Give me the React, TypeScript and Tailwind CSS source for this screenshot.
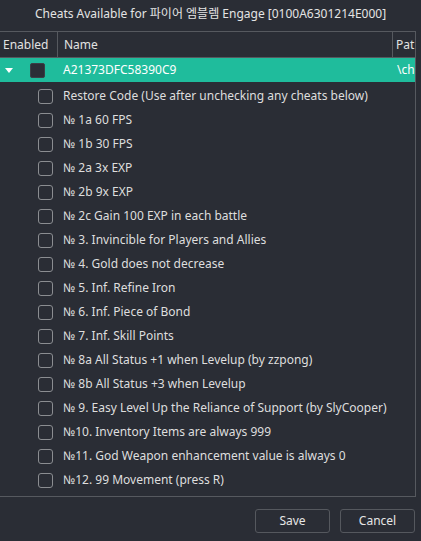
import React from "react";

const items = [
  "Restore Code (Use after unchecking any cheats below)",
  "№ 1a 60 FPS",
  "№ 1b 30 FPS",
  "№ 2a 3x EXP",
  "№ 2b 9x EXP",
  "№ 2c Gain 100 EXP in each battle",
  "№ 3. Invincible for Players and Allies",
  "№ 4. Gold does not decrease",
  "№ 5. Inf. Refine Iron",
  "№ 6. Inf. Piece of Bond",
  "№ 7. Inf. Skill Points",
  "№ 8a All Status +1 when Levelup (by zzpong)",
  "№ 8b All Status +3 when Levelup",
  "№ 9. Easy Level Up the Reliance of Support (by SlyCooper)",
  "№10. Inventory Items are always 999",
  "№11. God Weapon enhancement value is always 0",
  "№12. 99 Movement (press R)",
  "",
];

const font = { fontFamily: '"Noto Sans", "Noto Sans CJK KR", sans-serif' };

export default function App() {
  return (
    <div
      className="w-[421px] h-[541px] bg-[#2a2d35] text-[#dedede] text-[12px] overflow-hidden flex flex-col"
      style={font}
    >
      <div className="h-[31px] flex items-center justify-center text-[12px] text-[#e4e4e4] pb-[4px]">
        Cheats Available for 파이어 엠블렘 Engage [0100A6301214E000]
      </div>
      <div className="w-[416px] h-[466px] border-r border-b border-[#56595f] overflow-hidden flex flex-col">
        <div className="h-[27px] shrink-0 flex border-t border-b border-[#56595f] text-[#e2e2e2]">
          <div className="w-[58px] border-r border-[#56595f] pl-[3px] flex items-center">Enabled</div>
          <div className="w-[335px] border-r border-[#56595f] pl-[6px] flex items-center">Name</div>
          <div className="flex-1 pl-[3px] flex items-center overflow-hidden whitespace-nowrap">Pat</div>
        </div>
        <div className="h-[24px] shrink-0 flex items-center bg-[#1fbc9c] text-white">
          <div className="w-[30px] flex items-center pl-[5px]">
            <svg width="8" height="5" viewBox="0 0 8 5">
              <path d="M0 0 L8 0 L4 5 Z" fill="#ffffff" />
            </svg>
          </div>
          <div className="w-[15px] h-[15px] rounded-[2px] bg-[#2b2e36] border border-[#3c3f46]" />
          <div className="w-[348px] pl-[18px]">A21373DFC58390C9</div>
          <div className="flex-1 pl-[4px] overflow-hidden whitespace-nowrap">\ch</div>
        </div>
        <div className="flex flex-col pt-[2px]">
          {items.map((t, i) => (
            <div key={i} className="h-[24px] shrink-0 flex items-center">
              <div className="ml-[38px] w-[15px] h-[15px] rounded-[3px] border border-[#8b8d91] bg-[#2a2d35]" />
              {t ? <div className="ml-[10px] whitespace-nowrap">{t}</div> : null}
            </div>
          ))}
        </div>
      </div>
      <div className="flex justify-end gap-[10px] pr-[6px] pt-[12px]">
        <button className="w-[75px] h-[24px] rounded-[3px] border border-[#55585e] bg-[#2a2d35] text-[#e6e6e6] text-[12px]">
          Save
        </button>
        <button className="w-[75px] h-[24px] rounded-[3px] border border-[#55585e] bg-[#2a2d35] text-[#e6e6e6] text-[12px]">
          Cancel
        </button>
      </div>
    </div>
  );
}
